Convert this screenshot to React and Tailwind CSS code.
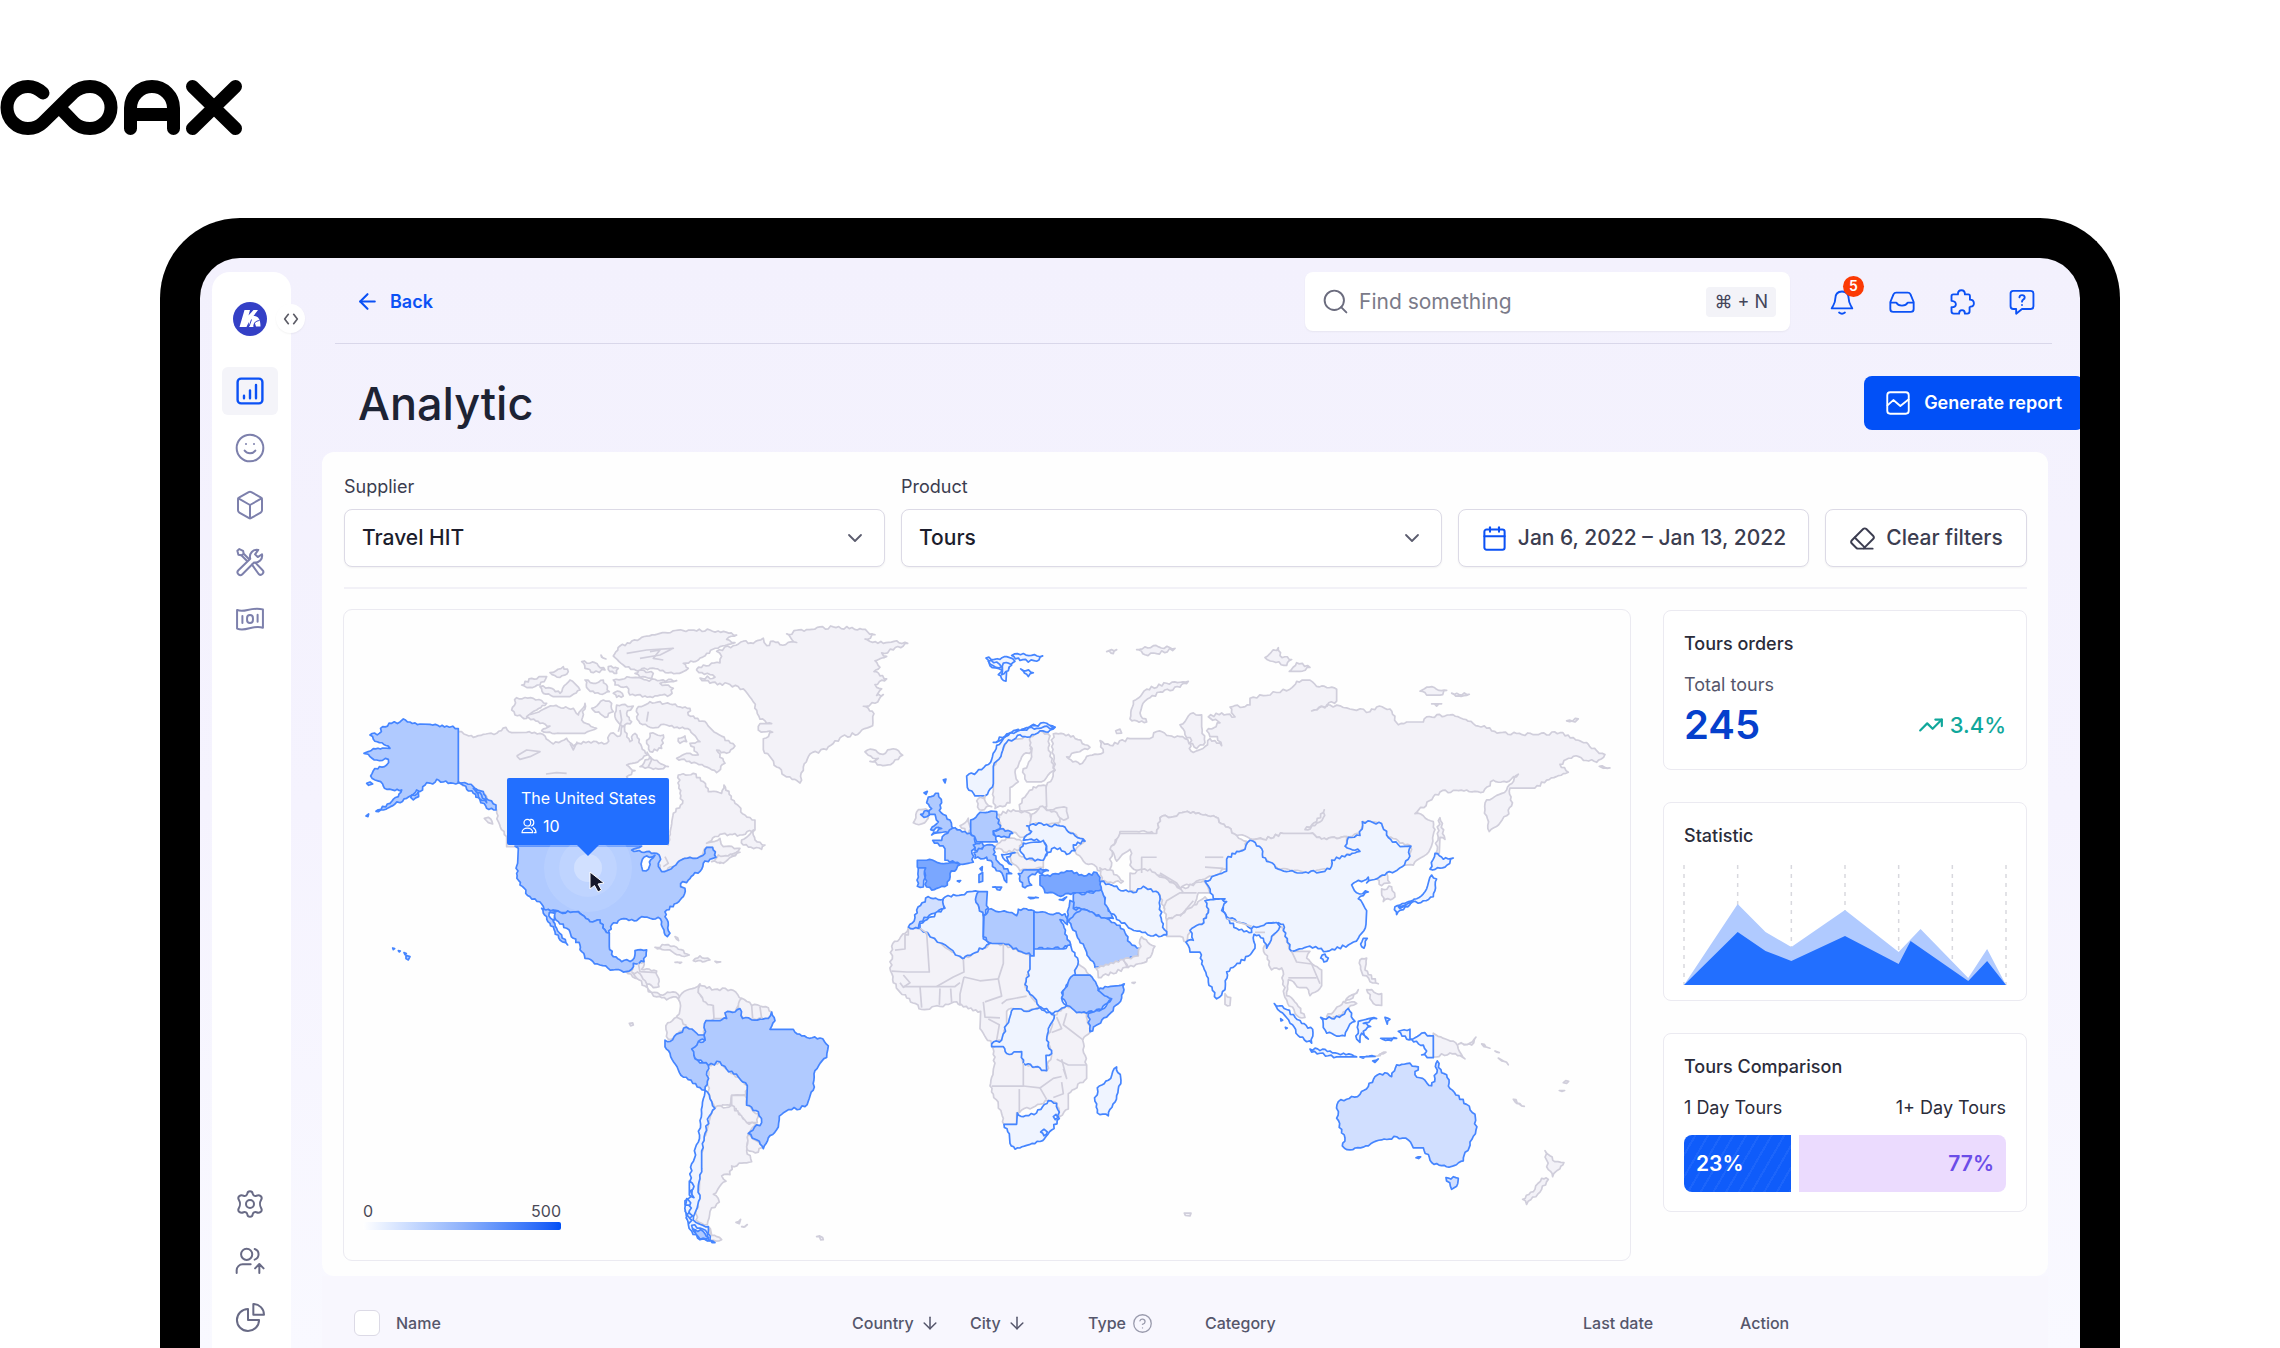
import React from 'react';
import { ArrowLeft, ArrowDown, Search, ChevronDown, Calendar, Eraser, Smile, Box, TrendingUp, CircleHelp } from 'lucide-react';

const NONE = 'fill-[#f3f2f8] stroke-[#d0cedb]';
const LOW = 'fill-[#eff4ff] stroke-[#4585ff]';
const MILD = 'fill-[#d1dfff] stroke-[#4585ff]';
const MID = 'fill-[#b0caff] stroke-[#4585ff]';
const HIGH = 'fill-[#7aa7ff] stroke-[#4585ff]';
const SEA = 'fill-white stroke-[#4585ff]';

// Each region has its own origin and scale, shapes are listed back to front
const regions = [
  {
    id: 'north-america',
    transform: 'translate(-4 -10) scale(0.3333)',
    shapes: [
      [NONE, '355 395 380 405 400 412 430 403 470 400 498 382 515 398 560 397 600 400 640 432 680 415 700 438 730 425 800 430 812 400 840 408 848 370 870 425 885 400 905 440 922 465 900 480 860 495 885 512 860 530 880 620 960 620 985 735 1000 640 1028 610 1020 580 1015 525 1060 520 1090 545 1105 575 1145 580 1152 555 1185 610 1215 645 1245 660 1245 690 1200 705 1140 703 1100 730 1140 715 1150 740 1200 745 1140 790 1128 772 1118 742 1100 742 1080 770 1035 775 1000 800 965 818 955 790 870 740 500 740 500 710 475 665 470 630 440 590 400 565 355 549'],
      [NONE, '870 130 905 112 960 100 1030 92 1110 90 1190 105 1160 118 1185 128 1140 140 1100 160 1075 180 1030 190 1045 205 1010 220 960 212 930 205 890 212 850 195 820 168 840 138'],
      [NONE, '1205 720 1240 690 1245 720 1275 735 1265 748 1210 735'],
      [NONE, '515 330 530 293 580 295 620 310 590 330 560 355 525 345'],
      [NONE, '560 350 640 318 700 325 715 345 735 310 725 360 770 385 735 400 660 400 605 392 630 378 600 370'],
      [NONE, '755 325 790 300 815 310 820 335 795 352'],
      [NONE, '830 315 880 318 860 340 875 365 850 380 825 350'],
      [NONE, '890 350 895 320 930 305 990 312 1050 325 1045 345 1100 370 1130 400 1185 438 1160 460 1130 450 1155 490 1130 518 1070 490 1010 475 1050 460 1075 465 1050 430 1080 425 1050 390 980 375 930 382 900 370'],
      [NONE, '1015 415 1035 408 1040 425 1020 430'],
      [NONE, '920 430 930 400 970 405 965 445 930 455'],
      [NONE, '900 500 930 470 985 500 940 508'],
      [NONE, '600 260 635 265 660 280 690 240 720 270 690 290 640 290 610 280'],
      [NONE, '545 255 575 235 620 230 600 255 570 262'],
      [NONE, '630 218 670 200 685 215 660 232'],
      [NONE, '725 185 765 188 795 210 760 218 735 205'],
      [NONE, '735 240 760 250 790 240 808 275 780 282 745 268'],
      [NONE, '805 200 835 205 830 220 810 215'],
      [NONE, '820 240 870 232 920 240 1010 242 960 250 1000 265 990 285 930 290 870 285 860 260 825 255'],
      [NONE, '820 280 840 275 850 288 830 292'],
      [NONE, '885 220 905 210 940 220 935 235 900 232'],
      [NONE, '1115 785 1135 765 1165 768 1200 757 1150 790'],
      [NONE, '433 655 445 652 458 672 445 668'],
      [NONE, '945 1042 975 1035 1010 1042 1048 1065 1025 1068 990 1050'],
      [NONE, '1060 1082 1080 1068 1110 1080 1088 1086'],
      [NONE, '1005 1087 1025 1087 1020 1090'],
      [NONE, '1125 1084 1142 1086 1130 1088'],
      [NONE, '1005 1010 1016 1022 1010 1018'],
      [NONE, '783 165 798 177 785 172'],
      [NONE, '858 1115 878 1108 880 1090 912 1085 905 1108 950 1113 957 1160 940 1163 900 1140'],
      [MID, '355 386 320 378 300 380 270 373 240 372 210 366 190 357 180 366 155 370 128 380 118 400 90 405 100 418 118 428 150 445 128 444 100 446 72 460 90 470 110 480 145 478 140 495 118 500 100 512 92 528 105 540 128 552 140 568 165 572 185 570 175 590 150 610 108 634 130 630 165 612 200 595 230 570 240 575 260 548 278 552 290 538 310 546 355 549'],
      [MID, '355 546 375 548 400 560 430 575 445 600 468 615 468 630 440 625 420 600 400 580 370 556'],
      [MID, '400 565 425 585 440 608 415 590'],
      [MID, '212 592 235 575 236 590 220 600'],
      [MID, '80 550 90 546 98 552 86 556'],
      [MID, '78 648 86 642 84 650'],
      [MID, '158 1044 164 1046 160 1049'],
      [MID, '175 1052 181 1053 178 1056'],
      [MID, '192 1058 199 1061 195 1064'],
      [MID, '198 1066 210 1070 205 1080 198 1076'],
      [MID, '525 738 535 745 533 790 530 820 540 855 570 890 605 912 612 928 640 930 660 937 700 938 715 935 750 965 780 960 795 990 808 1000 812 980 835 962 860 957 890 962 905 950 930 955 955 952 965 965 972 990 982 1010 990 1000 985 975 975 950 980 930 1010 910 1030 890 1035 865 1022 860 1028 845 1040 848 1060 825 1085 808 1090 790 1110 778 1128 772 1118 742 1100 742 1095 760 1080 770 1035 775 1000 800 965 815 955 790 962 778 950 760 920 755 875 750 905 738'],
      [SEA, '905 800 912 772 945 766 932 780 928 800 918 813 908 812'],
      [MID, '605 925 625 928 660 937 715 935 750 965 780 960 795 990 808 1000 808 1040 820 1070 845 1085 878 1080 885 1052 920 1050 912 1085 880 1090 875 1108 858 1115 820 1110 780 1095 735 1075 725 1055 720 1035 700 1015 680 985 655 965 638 938 640 965 650 985 665 1005 683 1035 660 1020 645 995 630 970 620 950'],
      [SEA, '628 938 645 940 642 962 632 955'],
    ],
    borders: [
      '860 160 920 150 1000 145 960 165 900 175',
      '930 155 960 150 940 175 970 180',
      '530 468 560 450 600 455 570 470 540 478 530 468',
      '618 522 650 518 680 520',
      '690 430 700 450 712 425',
      '840 330 845 360 835 395',
      '925 335 920 365',
      '920 455 935 480 925 500',
      '975 770 985 790 970 800',
      '895 1090 900 1115 950 1118',
    ],
  },
  {
    id: 'atlantic',
    transform: 'translate(276 -10) scale(0.3333 0.4337)',
    shapes: [
      [NONE, '230 160 250 150 300 145 305 130 290 118 340 105 370 95 400 100 430 88 440 105 460 95 480 103 530 98 500 78 560 68 640 62 720 66 765 80 735 90 790 100 830 94 863 100 820 115 785 122 800 130 765 140 780 155 762 165 780 175 800 182 765 195 785 205 770 220 790 218 765 238 730 245 762 262 758 290 720 305 660 318 620 345 570 355 550 385 540 422 500 408 470 385 430 345 430 320 458 305 415 300 420 285 455 285 420 275 412 262 400 235 370 205 330 195 270 192 240 180 285 178 230 162'],
      [NONE, '735 350 760 345 780 355 820 343 848 358 820 375 780 380 750 372 775 365 745 358'],
      [NONE, '36 858 60 862 80 885 95 905 120 910 150 905 175 910 180 925 160 915 140 922 110 915 85 903 75 890 50 872'],
      [NONE, '175 920 200 900 240 885 235 905 255 925 280 935 282 965 258 970 252 1003 235 1003 200 985 175 968 170 960 180 945'],
      [NONE, '240 888 260 895 340 900 365 920 345 950 315 952 320 965 295 965 282 965 280 935 250 925 235 905'],
      [NONE, '365 918 395 935 445 940 455 950 440 965 395 968 370 965 350 945'],
      [NONE, '143 975 170 962 198 980 170 1008 145 1013 138 990'],
      [NONE, '265 1073 300 1065 320 1082 355 1100 382 1120 378 1140 335 1142 330 1165 285 1170 270 1150 262 1110'],
      [NONE, '335 1142 375 1142 380 1165 415 1185 412 1205 380 1205 335 1165'],
      [NONE, '285 1170 335 1165 380 1205 412 1210 385 1230 380 1270 395 1295 335 1305 330 1325 305 1328 318 1340 280 1370 298 1388 270 1410 262 1440 228 1430 238 1360 240 1300 250 1240'],
      [NONE, '385 1232 430 1255 415 1273 382 1268'],
      [NONE, '265 1445 275 1465 305 1475 270 1478'],
      [NONE, '348 1435 362 1428 358 1438'],
      [NONE, '365 1445 382 1440 372 1446'],
      [NONE, '590 1468 608 1470 610 1475'],
      [NONE, '28 976 38 975 40 980 32 982'],
      [MID, '252 1003 258 970 300 970 320 965 315 952 345 950 360 942 368 965 395 968 445 965 455 950 465 970 450 990 490 990 520 990 545 1005 600 1010 625 1028 620 1055 585 1085 580 1130 555 1168 515 1175 478 1190 475 1215 450 1235 430 1265 418 1248 385 1230 425 1205 415 1180 380 1165 382 1120 355 1100 320 1082 300 1065 265 1073 225 1058 215 1035 235 1018 255 1015'],
      [MID, '135 1015 150 1018 200 985 235 1003 252 1003 255 1015 235 1018 215 1035 225 1058 265 1073 262 1110 255 1130 190 1100 150 1045 135 1030'],
      [LOW, '255 1130 270 1150 285 1172 268 1190 255 1230 245 1270 245 1310 235 1350 240 1380 220 1430 265 1445 270 1475 285 1482 240 1475 215 1455 205 1440 195 1385 215 1370 210 1340 215 1300 235 1250 240 1200 250 1150'],
      [LOW, '200 1380 212 1390 205 1405 218 1420 204 1432 196 1410'],
      [LOW, '208 1340 222 1352 212 1362 222 1378 208 1372'],
      [LOW, '196 1395 214 1402 198 1418 216 1430 206 1438'],
      [LOW, '215 1442 240 1448 262 1460 268 1478 235 1468 220 1455'],
      [MID, '218 1450 250 1456 266 1470 240 1474 228 1462'],
    ],
    borders: ['395 935 398 965', '420 938 425 965'],
  },
  {
    id: 'asia-pacific',
    transform: 'translate(786 10) scale(0.3333 0.3954)',
    shapes: [
      [NONE, '-225 380 -260 440 -250 480 -220 510 -210 525 -170 540 -135 560 -165 585 -140 610 -100 625 -80 650 -55 655 -60 630 -55 580 -30 535 20 535 80 540 90 500 190 485 250 495 320 545 400 555 460 540 540 540 590 555 650 548 690 540 700 510 750 515 775 550 840 570 845 580 810 625 850 620 900 580 915 530 910 510 880 495 855 490 930 435 1010 430 1060 435 1090 405 1130 410 1165 390 1130 430 1070 455 1065 480 1078 535 1130 495 1145 470 1140 425 1215 425 1250 405 1315 385 1290 365 1330 345 1400 360 1425 340 1385 325 1370 310 1290 285 1210 290 1110 285 1030 262 960 240 890 245 880 258 830 258 805 265 780 225 740 220 720 232 600 215 545 230 620 205 620 175 560 168 540 152 500 155 480 175 360 198 360 215 300 220 315 245 275 235 235 245 270 260 230 280 240 295 262 295 275 318 240 300 225 320 190 335 178 325 185 305 165 290 150 265 190 235 215 240 215 270 225 310 200 325 165 300 80 282 60 300 0 300 -60 317 -90 305 -80 335 -130 345 -150 365 -190 346 -120 322 -170 293 -230 288 -235 320'],
      [NONE, '-60 580 -30 540 80 540 90 500 190 485 250 495 320 545 350 560 345 580 295 605 290 630 225 655 200 660 150 680 100 650 35 640 0 620 5 590 0 580 -40 610'],
      [NONE, '0 640 60 630 150 680 220 660 240 690 205 690 190 735 110 760 90 695 40 680 0 690'],
      [NONE, '110 760 200 720 225 700 240 730 215 770 180 790 170 815 150 800 110 800'],
      [NONE, '360 560 400 555 460 540 540 540 590 555 650 548 650 572 690 585 610 610 600 630 535 640 445 630 400 600'],
      [NONE, '0 250 10 205 50 175 110 160 175 155 150 170 90 182 45 205 30 235 50 258 20 255'],
      [NONE, '20 75 70 65 135 72 80 85 45 88'],
      [NONE, '-70 80 -40 75 -50 85'],
      [NONE, '405 95 445 70 450 90 485 100 470 115 430 105'],
      [NONE, '478 130 500 108 540 120 510 130'],
      [NONE, '870 180 890 170 950 178 930 190 890 190'],
      [NONE, '965 185 1018 188 985 192'],
      [NONE, '905 212 935 212 920 218'],
      [NONE, '1310 255 1345 250 1335 258'],
      [NONE, '1408 370 1440 374 1420 375'],
      [NONE, '-43 280 -30 276 -25 286 -40 287'],
      [NONE, '-230 480 -190 475 -185 500 -245 512 -255 490'],
      [NONE, '525 530 560 510 583 480 580 500 555 520'],
      [NONE, '930 500 945 555 930 550 928 590 918 590 922 540'],
      [NONE, '740 655 770 640 780 665 755 672'],
      [NONE, '755 680 785 675 795 700 760 712'],
      [NONE, '400 830 425 800 455 775 470 805 485 838 540 838 530 855 575 885 575 925 540 950 530 930 510 930 475 910 470 950 500 970 525 1005 500 1000 465 955 455 880 425 885'],
      [NONE, '285 945 302 955 300 975 285 972'],
      [NONE, '690 860 710 855 705 885 745 920 720 915 695 890'],
      [NONE, '710 935 755 945 755 975 730 970'],
      [NONE, '645 965 685 935 660 960'],
      [NONE, '590 1003 640 965 680 970 655 982 635 1000 605 1008'],
      [NONE, '910 1045 970 1065 985 1085 1005 1110 960 1095 910 1105'],
      [NONE, '985 1073 1020 1070 1038 1055 1025 1075'],
      [NONE, '1055 1072 1080 1083 1068 1080'],
      [NONE, '1105 1108 1135 1125 1115 1115'],
      [NONE, '1095 1090 1108 1094 1100 1093'],
      [NONE, '1150 1212 1183 1230 1168 1224'],
      [NONE, '1300 1170 1316 1167 1310 1172'],
      [NONE, '1288 1190 1304 1190 1296 1192'],
      [NONE, '735 1103 768 1093 750 1102'],
      [NONE, '163 1500 183 1500 180 1507 166 1506'],
      [NONE, '1245 1342 1260 1355 1275 1370 1302 1372 1290 1388 1268 1408 1255 1390'],
      [NONE, '1235 1412 1255 1415 1235 1440 1190 1478 1178 1465 1215 1440'],
      [LOW, '225 660 290 635 290 605 320 585 345 580 360 557 395 578 398 600 445 630 535 640 600 630 605 607 690 585 645 572 655 550 690 545 697 510 755 515 775 550 810 573 843 572 835 605 808 628 765 645 710 665 715 650 665 670 680 690 715 688 685 705 710 735 708 770 685 805 655 822 590 838 540 825 485 838 465 800 460 770 430 765 400 780 370 780 330 765 290 750 275 720 285 705 250 705'],
      [LOW, '225 710 275 705 290 712 275 735 290 755 320 780 365 790 370 775 440 765 450 775 425 800 410 830 400 805 372 795 375 830 355 850 290 890 285 935 260 958 235 915 215 870 210 840 180 840 168 815 190 810 180 785 215 770 235 740'],
      [LOW, '692 820 700 805 712 805 702 830'],
      [LOW, '572 855 585 845 595 855 582 865'],
      [LOW, '915 590 940 605 970 602 945 625 900 630'],
      [LOW, '905 645 920 655 910 700 880 710 840 718 800 745 795 725 860 705 890 680'],
      [LOW, '805 725 845 710 840 720 810 730'],
      [LOW, '433 970 470 985 515 1020 548 1035 545 1070 510 1055 480 1020 450 990'],
      [LOW, '540 1085 600 1090 680 1105 620 1105 545 1093'],
      [LOW, '690 1105 735 1104 700 1108'],
      [LOW, '728 1115 745 1110 735 1119'],
      [LOW, '572 1005 605 1008 635 1000 655 982 675 1015 655 1030 645 1052 590 1045'],
      [LOW, '680 1060 685 1015 740 1008 700 1020 722 1028 700 1040 715 1060 695 1045 690 1068'],
      [LOW, '765 1005 780 1010 772 1022'],
      [LOW, '752 1058 800 1058 775 1062'],
      [LOW, '805 1040 840 1035 840 1060 875 1045 910 1052 910 1107 875 1100 890 1090 880 1075 830 1060'],
      [LOW, '452 1008 458 1012 453 1014'],
      [LOW, '466 1030 472 1032 468 1034'],
      [MILD, '625 1218 690 1200 715 1180 735 1155 765 1145 785 1155 800 1125 830 1122 865 1130 855 1150 905 1178 915 1160 922 1115 935 1145 950 1150 960 1185 1010 1225 1035 1250 1038 1290 1020 1320 1000 1368 965 1382 905 1372 880 1335 850 1335 835 1315 800 1307 755 1315 715 1330 660 1340 637 1330 645 1310 620 1260'],
      [MILD, '948 1410 985 1412 980 1432 965 1440'],
      [MILD, '858 1360 872 1358 866 1362'],
    ],
    borders: ['35 640 35 600 80 600', '225 600 280 600', '225 625 280 628', '90 640 140 665 160 690', '200 690 150 690 110 710 100 730', '485 838 500 865 545 870 570 920', '475 905 510 905 560 905', '290 755 365 775', '375 790 405 790', '150 750 190 710'],
  },
  {
    id: 'europe-africa',
    transform: 'translate(516 -10) scale(0.3333 0.3827)',
    shapes: [
      [LOW, '378 152 420 155 440 148 465 160 440 185 438 212 415 195 430 180 390 172'],
      [LOW, '385 160 410 162 425 175 400 172'],
      [LOW, '430 165 455 170 445 185 425 195'],
      [LOW, '455 145 490 140 548 146 530 160 480 158'],
      [LOW, '482 180 520 190 505 200'],
      [NONE, '400 435 425 400 440 365 510 358 515 395 485 410 465 450 475 475 450 490 450 530 405 545 400 500'],
      [NONE, '510 358 540 342 570 355 565 385 585 445 545 475 500 475 488 450 515 410'],
      [LOW, '320 460 350 450 385 430 410 380 440 355 480 340 520 325 585 333 565 345 540 342 510 358 480 352 440 372 425 400 400 435 400 480 375 512 345 512 322 490'],
      [LOW, '400 372 430 360 475 338 440 350'],
      [LOW, '485 338 525 328 560 322 585 332 545 334'],
      [NONE, '350 525 375 512 378 530 395 540 358 548'],
      [NONE, '495 515 520 488 558 485 560 540 480 550 478 535'],
      [NONE, '415 560 460 548 510 558 515 600 490 620 450 605 420 598'],
      [NONE, '510 585 515 560 540 540 590 555 600 580 560 588'],
      [NONE, '300 590 325 570 335 600 325 610'],
      [NONE, '400 645 440 622 485 630 480 650 440 660'],
      [NONE, '465 660 500 675 550 680 550 700 480 708 460 690 450 670'],
      [NONE, '160 582 175 548 205 550 205 570 185 585'],
      [MID, '205 515 235 505 245 530 238 550 270 575 275 592 290 598 265 608 215 614 245 597 212 600 235 580 225 560 205 560 215 545 200 530'],
      [MID, '182 560 200 550 208 562 192 568'],
      [MID, '192 504 202 500 198 508'],
      [LOW, '250 470 258 468 255 478'],
      [MID, '218 628 245 628 255 612 285 595 345 615 350 640 335 655 340 685 300 690 255 680 255 650'],
      [HIGH, '172 680 200 680 300 692 270 715 262 745 215 758 200 750 190 705 172 698'],
      [MID, '175 700 197 700 190 750 172 748'],
      [MID, '332 575 360 555 410 553 420 598 400 605 412 632 350 632 332 605'],
      [MID, '400 603 430 598 458 610 440 620 408 618'],
      [MID, '340 640 365 632 375 648 345 655'],
      [MID, '342 660 380 640 405 645 400 665 420 690 455 715 440 715 440 738 430 722 405 700 380 672 345 675'],
      [MID, '398 750 425 750 420 758'],
      [MID, '357 718 368 712 368 735 357 738'],
      [MID, '360 702 367 697 366 708'],
      [MID, '292 734 302 733 298 737'],
      [LOW, '425 665 465 660 440 672 455 692 435 680'],
      [LOW, '500 590 520 585 600 590 640 610 675 630 640 640 645 655 620 665 600 648 575 650 560 668 555 635 530 625 490 628 515 605'],
      [LOW, '490 635 550 628 562 660 550 680 500 678 480 655'],
      [MID, '475 715 500 705 560 705 530 712 505 725 515 745 495 752 480 735'],
      [MID, '505 777 535 778 520 780'],
      [HIGH, '540 720 570 722 620 708 680 720 710 712 725 740 725 760 680 765 640 765 610 772 555 765 540 745'],
      [HIGH, '535 705 565 707 545 716'],
      [HIGH, '598 783 620 776 610 785'],
      [NONE, '720 700 750 705 790 735 760 740 725 735'],
      [NONE, '145 858 180 858 310 938 395 897 430 900 522 930 510 965 495 1005 510 1030 545 1065 500 1075 460 1068 440 1075 440 1110 425 1150 395 1160 360 1120 362 1075 325 1068 290 1050 240 1062 185 1070 140 1040 100 1000 92 970 95 905'],
      [NONE, '395 1165 430 1167 485 1180 490 1210 560 1230 575 1185 560 1150 583 1085 620 1060 680 1080 690 1130 668 1150 680 1215 680 1250 625 1290 625 1330 600 1350 590 1315 565 1308 470 1340 470 1370 432 1370 415 1320 390 1270 405 1210'],
      [NONE, '655 950 670 960 705 1005 690 980 640 980'],
      [MILD, '145 855 165 830 170 810 205 775 250 782 252 808 215 820 180 840 175 858'],
      [LOW, '180 845 215 828 255 805 250 780 280 770 355 762 350 790 370 815 370 885 395 895 310 938 180 858'],
      [MID, '355 762 382 762 380 790 385 805 370 825 348 790'],
      [MID, '372 825 385 808 440 815 470 825 475 808 522 812 522 930 430 898 395 897 370 880'],
      [MID, '522 815 580 822 615 820 622 848 600 835 632 900 610 910 522 912'],
      [LOW, '510 930 522 930 522 912 610 912 632 902 645 930 655 945 640 985 610 1020 605 1040 620 1060 580 1080 545 1065 510 1030 495 1005 510 965'],
      [MID, '615 1015 640 980 690 980 710 1005 715 1020 755 1042 725 1070 680 1080 650 1078 620 1060 605 1040'],
      [MID, '715 1020 735 1010 793 1003 785 1040 740 1090 690 1128 685 1080 725 1070 755 1042'],
      [LOW, '395 1160 425 1150 440 1110 460 1068 500 1075 540 1065 583 1085 565 1120 560 1150 575 1185 558 1190 560 1230 525 1220 490 1210 485 1180 440 1185 430 1167 395 1167'],
      [LOW, '432 1370 470 1370 472 1340 490 1350 530 1340 565 1308 590 1315 598 1355 575 1385 540 1415 500 1425 465 1435 450 1420 448 1395'],
      [LOW, '542 1390 552 1383 562 1390 552 1400'],
      [LOW, '580 1350 588 1344 594 1352 586 1358'],
      [LOW, '712 1275 745 1255 770 1220 783 1255 770 1295 745 1348 712 1340 705 1310'],
      [MID, '640 768 690 765 725 757 735 790 760 832 735 835 680 810 640 806'],
      [MID, '622 830 630 785 642 790 640 806 665 808 652 832 625 840'],
      [MID, '625 840 665 808 740 832 780 850 810 895 840 910 835 930 790 940 755 955 705 960 680 920 650 875'],
      [LOW, '722 735 755 745 790 760 820 765 850 748 895 765 900 800 905 840 920 875 880 878 830 865 800 850 770 835 740 800 728 765'],
      [NONE, '708 962 790 940 805 960 715 987'],
      [NONE, '805 960 790 940 835 930 845 880 885 905 860 945'],
      [NONE, '816 1000 826 999 822 1002'],
    ],
    borders: [
      '145 858 145 875 135 875 135 912 105 915',
      '180 858 200 870 208 972 140 972 95 970',
      '310 938 312 972 280 985 230 1010',
      '430 898 430 950 415 990 425 1035 375 1050',
      '312 985 360 995 415 990',
      '312 985 300 1030 300 1060',
      '130 1010 180 1010 230 1010 285 1010 300 1000',
      '180 1010 185 1065',
      '240 1015 238 1058',
      '272 1015 275 1052',
      '130 980 150 1000 130 1012 120 1000',
      '370 1050 375 1090 420 1092',
      '425 1055 440 1045 500 1035',
      '385 1095 418 1110 410 1150',
      '490 1210 490 1270 395 1270',
      '490 1270 540 1275 580 1250 605 1245',
      '478 1278 478 1340',
      '540 1275 560 1305',
      '590 1200 625 1215 680 1215',
      '605 1200 620 1250 610 1225',
      '620 1080 610 1110 670 1150',
      '575 1130 605 1120 590 1090',
      '580 1300 610 1290 605 1260',
    ],
  },
];

// Breaks long segments into small steps so coastlines don't look ruled
const roughen = (data) => {
  const n = data.split(' ').map(Number);
  const out = [];
  const count = n.length / 2;
  for (let i = 0; i < count; i++) {
    const x1 = n[i * 2];
    const y1 = n[i * 2 + 1];
    const x2 = n[((i + 1) % count) * 2];
    const y2 = n[((i + 1) % count) * 2 + 1];
    out.push(`${x1},${y1}`);
    const len = Math.hypot(x2 - x1, y2 - y1);
    const straight = Math.abs(x2 - x1) < 3 || Math.abs(y2 - y1) < 2;
    if (straight || len < 14) continue;
    const steps = Math.min(Math.round(len / 8), 12);
    for (let s = 1; s < steps; s++) {
      const t = s / steps;
      const x = x1 + (x2 - x1) * t;
      const y = y1 + (y2 - y1) * t;
      const k = Math.sin(Math.round(x) * 12.9 + Math.round(y) * 78.2) * 3.5;
      out.push(`${(x - ((y2 - y1) / len) * k).toFixed(1)},${(y + ((x2 - x1) / len) * k).toFixed(1)}`);
    }
  }
  return out.join(' ');
};

const WorldMap = () => (
  <svg viewBox="0 0 1286 650" className="block w-full" role="img" aria-label="Orders by country">
    {regions.map((region) => (
      <g key={region.id} transform={region.transform} strokeWidth="1.7" strokeLinejoin="round">
        {region.shapes.map(([tone, data], index) => (
          <polygon key={index} className={tone} points={roughen(data)} vectorEffect="non-scaling-stroke" />
        ))}
        {region.borders.map((data) => (
          <polyline key={data} className="fill-none stroke-[#d0cedb]" points={data} vectorEffect="non-scaling-stroke" />
        ))}
      </g>
    ))}
    {/* Hover halo */}
    <g fill="#d8e5ff">
      <circle cx="244" cy="258" r="44" opacity="0.2" />
      <circle cx="244" cy="258" r="29" opacity="0.25" />
      <circle cx="244" cy="258" r="14" opacity="0.7" />
    </g>
    <path d="M246 262 v17 l4.5 -3.5 l3.5 6.5 l3.500 -2 l-3.500 -6 l6 -1 z" fill="#14172b" stroke="#fff" strokeWidth="1" />
  </svg>
);

const Icon = ({ className, children, strokeWidth = 1.5 }) => (
  <svg viewBox="0 0 24 24" className={className} fill="none" stroke="currentColor" strokeWidth={strokeWidth} strokeLinecap="round" strokeLinejoin="round" aria-hidden="true">
    {children}
  </svg>
);

const CoaxLogo = () => (
  <svg viewBox="0 0 242 55" className="h-[55px] w-[242px]" fill="none" stroke="#000" strokeWidth="13" strokeLinecap="round" strokeLinejoin="round" role="img" aria-label="COAX">
    <path d="M43 13 C38 8.500 33 6.500 28 6.500 A21 21 0 0 0 28 48.500 C34 48.500 39 46.500 43 42.500 L73 13 C78 8.500 83 6.500 90 6.500 A21 21 0 0 1 90 48.500 C83 48.500 78 46.500 74 42.500 L61 29" />
    <path d="M130.500 48.500 V28 A21.500 21.500 0 0 1 173.500 28 V48.500 M130.500 34.500 H173.500" />
    <path d="M192.500 6.500 L235.500 48.500 M235.500 6.500 L192.500 48.500" />
  </svg>
);

const mainNav = [
  {
    label: 'Analytic',
    active: true,
    icon: (
      <Icon className="size-8" strokeWidth={1.8}>
        <rect x="2.700" y="2.700" width="18.600" height="18.600" rx="2.600" />
        <path d="M7.500 15.500 V17.500 M12 11.500 V17.500 M16.500 7.500 V17.500" />
      </Icon>
    ),
  },
  { label: 'Customers', icon: <Smile className="size-8" strokeWidth={1.5} /> },
  { label: 'Products', icon: <Box className="size-8" strokeWidth={1.5} /> },
  {
    label: 'Tools',
    icon: (
      <Icon className="size-8">
        <path d="M2.500 3.500 L4 2.300 L6.800 3.600 L7.300 5.800 L11.200 9.700 M2.500 3.500 L3.300 6.500 L5.500 7 L9.800 11.200 M5.500 7 L7.300 5.800" />
        <path d="M21 6.200 L17.800 8.300 L15.800 6.300 L18.200 2.900 A5.200 5.200 0 0 0 12.200 9.500 L3.300 18.200 A2.100 2.100 0 0 0 6.300 21.200 L15 12.400 A5.200 5.200 0 0 0 21 6.200 Z" />
        <path d="M13.500 14 L18.500 21 A2 2 0 0 0 21.300 18 L16 12.500" />
      </Icon>
    ),
  },
  {
    label: 'Payments',
    icon: (
      <Icon className="size-8">
        <path d="M2.300 5.200 C8 8 12 2.500 21.700 4.800 V18.600 C14 16 9 22 2.300 19.200 Z" />
        <rect x="9.800" y="9" width="4.400" height="6" rx="2.200" />
        <path d="M6.300 9.800 V15 M17.700 8.800 V14" />
      </Icon>
    ),
  },
];

const footNav = [
  {
    label: 'Settings',
    icon: (
      <Icon className="size-8">
        <circle cx="12" cy="12" r="3" />
        <path d="M10 4.200 C10.300 1.800 13.700 1.800 14 4.200 C14.300 5.600 15.500 6.300 16.800 5.800 C19.200 4.800 21.800 6.500 20.300 9 C19.300 10.600 19.300 13.400 20.300 15 C21.800 17.500 19.200 19.200 16.800 18.200 C15.500 17.700 14.300 18.400 14 19.800 C13.700 22.200 10.300 22.200 10 19.800 C9.700 18.400 8.500 17.700 7.200 18.200 C4.800 19.200 2.200 17.500 3.700 15 C4.700 13.400 4.700 10.600 3.700 9 C2.200 6.500 4.800 4.800 7.200 5.800 C8.500 6.300 9.700 5.600 10 4.200 Z" />
      </Icon>
    ),
  },
  {
    label: 'Invite',
    icon: (
      <Icon className="size-8">
        <circle cx="9.500" cy="7" r="4.200" />
        <path d="M2 21 V19 A4.500 4.500 0 0 1 6.500 14.500 H12.500 M15.500 3 A4.200 4.200 0 0 1 15.500 11 M19 21 V14.500 M15.800 17.500 L19 14.300 L22.200 17.500" />
      </Icon>
    ),
  },
  {
    label: 'Reports',
    icon: (
      <Icon className="size-8">
        <path d="M10.500 5.200 A8.300 8.300 0 1 0 18.800 13.500 H10.500 Z" />
        <path d="M14.500 1.500 A8 8 0 0 1 22.500 9.500 H14.500 Z" />
      </Icon>
    ),
  },
];

const Sidebar = () => (
  <aside className="relative ml-3 mt-3.5 flex w-[79px] shrink-0 flex-col items-center rounded-t-[18px] bg-white pb-1.5 pr-1 pt-[30px]">
    <svg viewBox="0 0 34 34" className="size-[34px]" role="img" aria-label="Logo">
      <circle cx="17" cy="17" r="17" fill="#3440c6" />
      <path d="M11.500 8 H17 L15.500 13.500 L20.500 8 H25 L20.500 14 C25 13.500 27.500 17 27.500 24.500 H23 L21.500 20 L20.500 25 H16 L15.800 20 L13.500 25 H6.500 Z" fill="#fff" />
      <path d="M16 24.500 L18.500 17.500 M20.800 24.500 C20.800 21 22.500 19 26.500 18.500" stroke="#3440c6" strokeWidth="1" fill="none" />
    </svg>
    <button type="button" aria-label="Toggle sidebar" className="absolute -right-3.5 top-8 flex size-[29px] items-center justify-center rounded-full bg-white text-[#5c5c66] shadow-xs">
      <Icon className="size-4" strokeWidth={2.5}>
        <path d="M8 5 L2.500 12 L8 19 M16 5 L21.500 12 L16 19" />
      </Icon>
    </button>
    <nav className="mt-[31px] flex flex-1 flex-col items-center justify-between">
      <div className="flex flex-col gap-[9px]">
        {mainNav.map((item) => (
          <a
            key={item.label}
            href="#"
            aria-label={item.label}
            className={item.active ? 'flex h-12 w-14 items-center justify-center rounded-md bg-[#f4f4f9] text-[#0b51f5]' : 'flex h-12 w-14 items-center justify-center text-[#7d80ac]'}
          >
            {item.icon}
          </a>
        ))}
      </div>
      <div className="flex flex-col gap-[9px]">
        {footNav.map((item) => (
          <a key={item.label} href="#" aria-label={item.label} className="flex h-12 w-14 items-center justify-center text-[#686a85]">
            {item.icon}
          </a>
        ))}
      </div>
    </nav>
  </aside>
);

const TopBar = () => (
  <header className="-mr-1 ml-[13px] flex h-[86px] items-center border-b border-[#d9d7ea] pl-5 pr-4 pt-0.5">
    <a href="#" className="mr-auto flex items-center gap-[10px] text-lg font-semibold text-[#0b51f5]">
      <ArrowLeft className="size-[25px]" strokeWidth={2} />
      Back
    </a>
    <label className="flex h-[59px] w-[485px] items-center rounded-lg bg-white pl-4 pr-3.5 shadow-xs">
      <Search className="size-[29px] text-[#6b6c7e]" strokeWidth={1.6} />
      <input type="search" aria-label="Search" placeholder="Find something" className="ml-[9px] min-w-0 flex-1 text-[21px] text-[#3b3d50] placeholder-[#7b7b89] outline-none" />
      <kbd className="rounded-sm bg-[#f3f3f8] px-2 font-[Inter,'DejaVu_Sans',sans-serif] text-[18px] leading-[30px] text-[#43455a]">⌘ + N</kbd>
    </label>
    <div className="ml-[38px] flex gap-8 text-[#0b51f5]">
      <button type="button" aria-label="Notifications" className="relative">
        <Icon className="size-7" strokeWidth={1.6}>
          <path d="M12 3 C7.500 3 6.200 6.500 6.200 9.500 C6.200 13.500 4.500 14.500 3.200 17.500 H20.800 C19.500 14.500 17.800 13.500 17.800 9.500 C17.800 6.500 16.500 3 12 3 Z M9.500 21 C11 22.200 13 22.200 14.500 21" />
        </Icon>
        <span className="absolute -right-2 -top-3 flex size-[21px] items-center justify-center rounded-full bg-[#fb3a04] text-sm font-semibold text-white">5</span>
      </button>
      <button type="button" aria-label="Inbox">
        <Icon className="size-7" strokeWidth={1.6}>
          <path d="M7 4 H17 Q18.500 4 19.300 5.500 L22 12 V18 Q22 20.500 19.500 20.500 H4.500 Q2 20.500 2 18 V12 L4.700 5.500 Q5.500 4 7 4 Z M2 12.500 H7 C9 16 15 16 17 12.500 H22" />
        </Icon>
      </button>
      <button type="button" aria-label="Integrations">
        <Icon className="size-7" strokeWidth={1.6}>
          <path d="M8.500 5.500 C8.500 0.800 14.500 0.800 14.500 5.500 H17.500 Q18.800 5.500 18.800 7 V10 C23.200 10 23.200 16 19.500 16 L18.500 16.500 V20 Q18.500 22 16.500 22 H14.500 C14.500 18 9.500 18 9.500 22 H5 Q3 22 3 20 V16.500 C8 16.500 8 11.500 3 11 V7 Q3 5.500 4.500 5.500 Z" />
        </Icon>
      </button>
      <button type="button" aria-label="Help">
        <Icon className="size-7" strokeWidth={1.6}>
          <path d="M4.500 2.500 H19.500 Q21.800 2.500 21.800 4.800 V15.700 Q21.800 18 19.500 18 H12 L7 22 V18 H4.500 Q2.200 18 2.200 15.700 V4.800 Q2.200 2.500 4.500 2.500 Z" />
          <path d="M9.800 8 C10 5.300 14.500 5.500 14.300 8.200 C14.200 10 12 9.800 12 11.700 M12 14.500 V14.600" />
        </Icon>
      </button>
    </div>
  </header>
);

const FilterSelect = ({ id, label, value }) => (
  <div className="flex flex-1 flex-col gap-2.5">
    <label htmlFor={id} className="text-lg leading-6 text-[#3b3d50]">{label}</label>
    <div className="relative">
      <select id={id} defaultValue={value} className="h-[58px] w-full appearance-none rounded-lg border border-[#dcdae6] bg-white px-[17px] text-[21px] font-medium text-[#1c1d2c] shadow-xs">
        <option>{value}</option>
      </select>
      <ChevronDown className="pointer-events-none absolute right-[18px] top-[17px] size-6 text-[#5b5c6e]" strokeWidth={1.8} />
    </div>
  </div>
);

const Filters = () => (
  <div className="flex items-end gap-4 border-b-2 border-[#f2f1f7] pb-5">
    <FilterSelect id="supplier" label="Supplier" value="Travel HIT" />
    <FilterSelect id="product" label="Product" value="Tours" />
    <button type="button" className="flex h-[58px] w-[351px] items-center justify-center gap-2.5 whitespace-nowrap rounded-lg border border-[#dcdae6] bg-white text-[21px] font-medium text-[#3b3d50] shadow-xs">
      <Calendar className="size-[27px] text-[#0b51f5]" strokeWidth={1.8} />
      Jan 6, 2022 – Jan 13, 2022
    </button>
    <button type="button" className="flex h-[58px] w-[202px] items-center justify-center gap-2.5 whitespace-nowrap rounded-lg border border-[#dcdae6] bg-white text-[21px] font-medium text-[#3b3d50] shadow-xs">
      <Eraser className="size-[27px]" strokeWidth={1.7} />
      Clear filters
    </button>
  </div>
);

const MapCard = () => (
  <section className="relative flex-1 rounded-lg outline outline-[#ebeaf1]">
    <WorldMap />
    <div className="absolute left-[163px] top-[168px] h-[67px] w-[162px] whitespace-nowrap rounded-xs bg-[#226fff] pl-3.5 pt-2 text-base text-white">
      <div className="leading-6">The United States</div>
      <div className="mt-1 flex items-center gap-1.5 leading-6">
        <Icon className="size-4" strokeWidth={1.8}>
          <circle cx="9.500" cy="7" r="5" />
          <path d="M1.500 22 C1.500 13 17.500 13 17.500 22 Z M14.500 2 C20 1 21 11 15.500 12 M18.500 14.500 C21 16 22.500 18.500 22.500 22 H20" />
        </Icon>
        10
      </div>
      <svg viewBox="0 0 22 11" className="absolute left-[70px] top-full w-[22px] fill-[#226fff]" aria-hidden="true">
        <path d="M0 0 H22 L11 11 Z" />
      </svg>
    </div>
    <div className="absolute bottom-[30px] left-[19px] w-[198px] text-base text-[#4a4a57]">
      <div className="flex justify-between leading-[22px]">
        <span>0</span>
        <span>500</span>
      </div>
      <div className="h-2 rounded-xs bg-linear-to-r from-white via-[#8fb2fb] to-[#004ff5]" />
    </div>
  </section>
);

const OrdersCard = () => (
  <section className="rounded-lg border border-[#ebeaf1] bg-white px-5 pb-6 pt-[21px]">
    <h2 className="text-lg font-medium leading-6 text-[#2b2c3a]">Tours orders</h2>
    <p className="mt-[17px] text-lg leading-6 text-[#55566b]">Total tours</p>
    <div className="mt-2 flex items-center justify-between">
      <span className="text-[40px] font-semibold leading-10 text-[#0540cc]">245</span>
      <span className="flex items-center gap-1.5 text-[22px] font-medium text-[#10a79b]">
        <TrendingUp className="size-[26px]" strokeWidth={2} />
        3.4%
      </span>
    </div>
  </section>
);

const StatisticCard = () => (
  <section className="rounded-lg border border-[#ebeaf1] bg-white px-5 pb-[15px] pt-[21px]">
    <h2 className="text-lg font-medium leading-6 text-[#2b2c3a]">Statistic</h2>
    <svg viewBox="0 0 324 120" preserveAspectRatio="none" className="mt-[17px] block h-[120px] w-full overflow-visible" role="img" aria-label="Statistic">
      {[0, 54, 108, 162, 216, 270, 324].map((x) => (
        <line key={x} x1={x} y1="0" x2={x} y2="120" stroke="#d8d8de" strokeWidth="1.500" strokeDasharray="4 5" />
      ))}
      <polygon fill="#b0caff" points="0,120 54,39 82,67 108,82 162,45 216,87 238,64 286,113 305,84 324,120" />
      <polygon fill="#226fff" points="0,120 54,67 82,86 108,96 162,71 216,99 228,76 286,116 305,96 324,120" />
    </svg>
  </section>
);

const ComparisonCard = () => (
  <section className="rounded-lg border border-[#ebeaf1] bg-white px-5 pb-[19px] pt-[21px]">
    <h2 className="text-lg font-medium leading-6 text-[#2b2c3a]">Tours Comparison</h2>
    <div className="mt-[17px] flex justify-between text-lg leading-6 text-[#2b2c3a]">
      <span>1 Day Tours</span>
      <span>1+ Day Tours</span>
    </div>
    <div className="mt-[15px] flex h-[57px] gap-2 text-[21px] font-semibold">
      <div className="flex w-[107px] items-center rounded-l-lg bg-[repeating-linear-gradient(120deg,#0f5cfa_0px,#0f5cfa_9px,#1c65fb_9px,#1c65fb_11px)] pl-3 text-white">23%</div>
      <div className="flex flex-1 items-center justify-end rounded-r-lg bg-[#ebdbfe] pr-3 text-[#6b4de8]">77%</div>
    </div>
  </section>
);

const OrdersTable = () => (
  <table className="w-full table-fixed bg-[#f8f7fe] text-left text-base text-[#55566b]">
    <thead>
      <tr className="h-[94px] *:font-medium">
        <th className="w-[74px] pl-8">
          <input type="checkbox" aria-label="Select all" className="block size-[26px] appearance-none rounded-md border border-[#dcdae6] bg-white" />
        </th>
        <th>Name</th>
        <th className="w-[118px]">
          <span className="flex items-center gap-1.5">Country <ArrowDown className="size-5" strokeWidth={1.8} /></span>
        </th>
        <th className="w-[118px]">
          <span className="flex items-center gap-1.5">City <ArrowDown className="size-5" strokeWidth={1.8} /></span>
        </th>
        <th className="w-[117px]">
          <span className="flex items-center gap-1.5">Type <CircleHelp className="size-[21px] text-[#9a9bad]" strokeWidth={1.5} /></span>
        </th>
        <th className="w-[378px]">Category</th>
        <th className="w-[157px]">Last date</th>
        <th className="w-[308px]">Action</th>
      </tr>
    </thead>
  </table>
);

const App = () => {
  return (
    <div className="flex h-screen flex-col overflow-hidden bg-white pt-20 font-[Inter,sans-serif]">
      <CoaxLogo />
      <div className="mx-40 mt-[83px] flex min-h-0 flex-1 overflow-hidden rounded-t-[80px] border-[40px] border-b-0 border-black bg-linear-to-b from-[#f3f1fd] via-[#f5f3fe] to-[#f9f9ff]">
        <Sidebar />
        <main className="ml-[31px] min-w-0 flex-1 pr-8">
          <TopBar />
          <div className="-mr-9 flex h-[108px] items-center justify-between pl-9 pt-2.5">
            <h1 className="text-[45px] font-medium leading-none text-[#1d2334]">Analytic</h1>
            <button type="button" className="flex h-[54px] items-center gap-3 rounded-lg bg-[#0150f7] pl-5 pr-[22px] text-lg font-semibold text-white">
              <Icon className="size-7" strokeWidth={1.6}>
                <rect x="2.800" y="2.800" width="18.400" height="18.400" rx="2.500" />
                <path d="M3 14 L8 9.500 L14 14.500 L21 9" />
              </Icon>
              Generate report
            </button>
          </div>
          <div className="rounded-xl bg-[#fefefe] pb-4 pl-[22px] pr-[21px] pt-[23px]">
            <Filters />
            <div className="mt-[21px] flex items-start gap-[33px]">
              <MapCard />
              <div className="flex w-[364px] shrink-0 flex-col gap-8">
                <OrdersCard />
                <StatisticCard />
                <ComparisonCard />
              </div>
            </div>
          </div>
          <OrdersTable />
        </main>
      </div>
    </div>
  );
};

export default App;
